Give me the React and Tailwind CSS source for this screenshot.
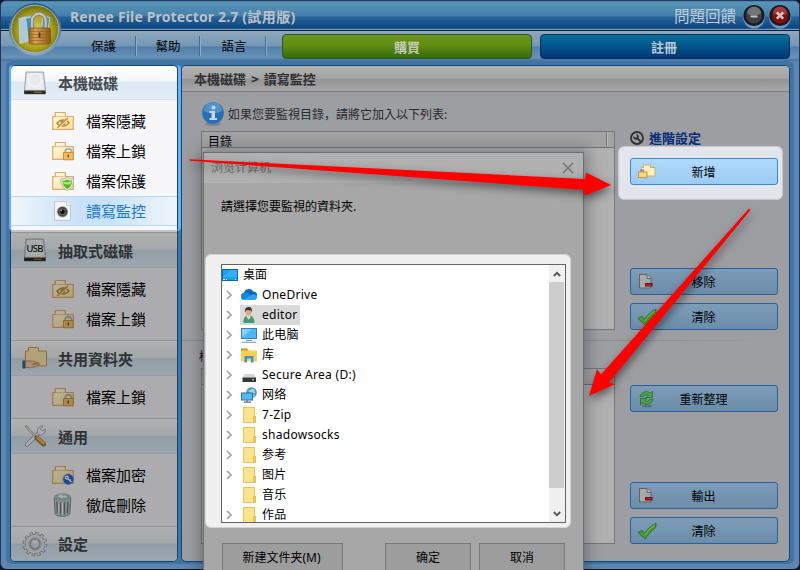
import React from "react";

const FOLDER_PATH = "M.7 18.300V5.500h2.600V1.500h10v4h8v12.800z";

function Folder({ mark }) {
  return (
    <svg width="22" height="20" viewBox="0 0 22 20" className="shrink-0">
      <defs>
        <linearGradient id="fold" x1="0" y1="0" x2="1" y2="1">
          <stop offset="0" stopColor="#fffbe4" />
          <stop offset="1" stopColor="#fbdf98" />
        </linearGradient>
      </defs>
      <path d={FOLDER_PATH} fill="url(#fold)" stroke="#dda970" strokeWidth="1.2" />
      <path d="M3.500 5.600h9.600" stroke="#eac58d" />
      {mark === "hide" && (
        <g fill="none" stroke="#b98a3d" strokeWidth="1.500">
          <path d="M5 12.500c3-4.300 9-4.600 12-.6-3 4-9 4.300-12 .6z" />
          <circle cx="11" cy="12" r="1.800" fill="#b98a3d" />
          <path d="M17 6.500L6 17" stroke="#fbe8b4" strokeWidth="2.400" />
          <path d="M15.800 7L5.500 16.700" strokeWidth="1.200" />
        </g>
      )}
      {mark === "lock" && (
        <g>
          <path d="M13.300 12.500V10.800a3 3 0 016.200 0v1.700" fill="none" stroke="#b0b0b0" strokeWidth="1.900" />
          <path d="M11.500 11.500h9.800v7.300h-9.800z" fill="#efbf62" stroke="#c9913d" />
          <path d="M16.300 13.500v3" stroke="#7b5622" strokeWidth="1.600" />
        </g>
      )}
      {mark === "shield" && (
        <g>
          <path d="M15.300 6c2 1.600 4.200 2 6.400 2 0 5-1.700 9.300-6.400 11.700C10.600 17.300 8.700 13 8.700 8c2.300 0 4.600-.4 6.600-2z" fill="#e5ece4" stroke="#9aa39a" strokeWidth=".7" />
          <path d="M15.300 8.500c1.600.900 3.200 1.300 4.900 1.300-.3 3.600-1.700 6.600-4.900 8.400-3.100-1.800-4.700-4.800-5-8.400 1.800 0 3.400-.4 5-1.300z" fill="#58ba1c" />
          <path d="M11 10.500c3 1 6 .5 8.500-.4l-.8 2.800c-2.200.8-4.600.8-6.900.2z" fill="#a8e672" />
        </g>
      )}
      {mark === "key" && (
        <g>
          <circle cx="16.300" cy="14.200" r="5.400" fill="#2f62c8" stroke="#8aaef0" strokeWidth=".8" />
          <circle cx="14.800" cy="12.600" r="1.500" fill="none" stroke="#fff" strokeWidth="1.300" />
          <path d="M16 13.800l3.300 3.200m-1.500-1.400l1-1" stroke="#fff" strokeWidth="1.300" />
        </g>
      )}
    </svg>
  );
}

function Camera() {
  return (
    <svg width="22" height="20" viewBox="0 0 22 20" className="shrink-0">
      <path d="M2.500 .6h12l4 4v14.800h-16z" fill="#f5f5f5" stroke="#c3c6cb" />
      <path d="M14.500 .6v4h4" fill="#fff" stroke="#c3c6cb" />
      <circle cx="10.500" cy="10.800" r="5.600" fill="#8d8d8d" />
      <circle cx="10.500" cy="10.800" r="4.700" fill="#444" />
      <circle cx="10.500" cy="10.800" r="3.200" fill="#666" />
      <circle cx="10.500" cy="10.800" r="2.300" fill="#0c0c0c" />
      <circle cx="9.200" cy="9.500" r=".8" fill="#aaa" />
    </svg>
  );
}

function Trash() {
  return (
    <svg width="22" height="24" viewBox="0 0 22 24" className="shrink-0">
      <path d="M2.200 4.500l1 16.500c2 3 12.500 3 14.600 0l1-16.500c-3 3.300-13.600 3.300-16.600 0z" fill="#bfcacc" stroke="#79868a" />
      <path d="M5 8.500l.5 12M8.500 9v12.500M12.500 9v12.500M16 8.500l-.5 12" stroke="#6d787b" strokeWidth="1.500" />
      <path d="M6.700 9v12M10.500 9v12.500" stroke="#f6fbfb" />
      <ellipse cx="10.500" cy="4" rx="8" ry="3.300" fill="#8bc1a0" stroke="#b3bdc0" />
      <path d="M5 3.500l4-2.500 4 2.500-3 2zM12 2l4 2-4 1z" fill="#e3f1ff" />
    </svg>
  );
}

function Drive({ usb }) {
  return (
    <svg width="24" height="24" viewBox="0 0 24 24" className="shrink-0">
      <path d="M3 1h17.500l2 18.500v3.500H1.500v-3.500z" fill="#d9dcdf" stroke="#8f9396" strokeWidth=".8" />
      <path d="M1.200 19.500h21.300v3.500H1.200z" fill="#262b28" />
      <path d="M11 20.500h8v1.500h-8z" fill="#7c6420" />
      <path d="M4.200 2h15.200l1.700 16.300H2.600z" fill="#e9ebed" />
      <circle cx="12" cy="9" r="6.500" fill="#e6eaec" stroke="#f8f9fa" />
      {usb && (
        <text x="12" y="14" textAnchor="middle" fontFamily="'Noto Sans', sans-serif" fontWeight="500" fontSize="9.500" fill="#0c0c0c" textLength="17">
          USB
        </text>
      )}
    </svg>
  );
}

function SharedFolder() {
  return (
    <svg width="26" height="24" viewBox="0 0 26 24" className="shrink-0">
      <path d="M3.500 20V5h3V1.500h10V5h8v15z" fill="#f7dfa8" stroke="#c79455" />
      <path d="M1 15.500l3-.5 5 0c2-.5 4 1 5.500 1 2 .2 2 1.600 0 1.900l-4 .3 6-.8c1.800-.2 1.800 1 .3 1.600l-6 2.500c-3 .8-6-.5-9.800-.3z" fill="#efc4a0" stroke="#b37c53" strokeWidth=".8" />
      <path d="M.5 14.500h3v8h-3z" fill="#2f6378" />
    </svg>
  );
}

function Tools() {
  return (
    <svg width="24" height="24" viewBox="0 0 24 24" className="shrink-0">
      <path d="M4 20.500L16.500 8.500" stroke="#8b9299" strokeWidth="4.200" strokeLinecap="round" />
      <path d="M4 20.500L16.500 8.500" stroke="#edf1f4" strokeWidth="2.800" strokeLinecap="round" />
      <path d="M15 9.500c-1.500-4 1-7.500 5-7.500l-2.500 3 2 2.200 3-2.200c.3 4-3 6.500-6 6z" fill="#edf1f4" stroke="#8b9299" strokeWidth=".8" />
      <path d="M2 2.500l2-1 2 3 7 7.500-1.200 1.200L5 6z" fill="#e8ecef" stroke="#8b9299" strokeWidth=".8" />
      <path d="M14 14l6.500 6" stroke="#a4752f" strokeWidth="5" strokeLinecap="round" />
      <path d="M14.500 13.800l6 5.400" stroke="#deb064" strokeWidth="2.800" strokeLinecap="round" />
    </svg>
  );
}

function Gear() {
  return (
    <svg width="26" height="26" viewBox="0 0 26 26" className="shrink-0">
      <circle cx="13" cy="13" r="10.800" fill="none" stroke="#858a8f" strokeWidth="3" strokeDasharray="3 2.650" />
      <circle cx="13" cy="13" r="7.300" fill="none" stroke="#858a8f" strokeWidth="5.800" />
      <circle cx="13" cy="13" r="10.500" fill="none" stroke="#dfe3e6" strokeWidth="2.200" strokeDasharray="2 3.500" strokeDashoffset="-.5" />
      <circle cx="13" cy="13" r="7.400" fill="none" stroke="#dde1e4" strokeWidth="4.400" />
      <circle cx="13" cy="13" r="6" fill="none" stroke="#a4a9ae" />
    </svg>
  );
}

function Logo() {
  return (
    <svg width="56" height="56" viewBox="0 0 56 56">
      <defs>
        <radialGradient id="lg" cx=".5" cy=".55" r=".55">
          <stop offset="0" stopColor="#d9cf62" />
          <stop offset=".65" stopColor="#aaa11e" />
          <stop offset="1" stopColor="#6d6b0c" />
        </radialGradient>
        <linearGradient id="ring" x1="0" y1="0" x2="0" y2="1">
          <stop offset="0" stopColor="#1d568b" />
          <stop offset="1" stopColor="#86aac6" />
        </linearGradient>
        <linearGradient id="gold" x1="0" y1="0" x2="1" y2="0">
          <stop offset="0" stopColor="#9b641c" />
          <stop offset=".3" stopColor="#d8a352" />
          <stop offset="1" stopColor="#8e5716" />
        </linearGradient>
      </defs>
      <circle cx="28" cy="28.500" r="26.300" fill="url(#ring)" />
      <circle cx="28" cy="28" r="23.800" fill="url(#lg)" stroke="#b1b4a6" strokeWidth="1" />
      <path d="M16 16l11-2v24l-10 3z" fill="#b9c6cb" stroke="#8a989e" strokeWidth=".7" />
      <path d="M18 18l8-1.500v20L19 39z" fill="#3e93bb" />
      <path d="M12 17.500l6.500-1.500 3 24-8.500 2.500z" fill="#a9c9d6" stroke="#c9d0d0" strokeWidth=".9" />
      <path d="M36 15l7 1.500-3 18.500h-6z" fill="#489cc0" stroke="#bcc7ca" />
      <path d="M25 28v-8.500a6.800 6.800 0 0113.600 0V28" fill="none" stroke="#7f7d74" strokeWidth="3.800" />
      <path d="M25 28v-8.500a6.800 6.800 0 0113.600 0V28" fill="none" stroke="#c2c2be" strokeWidth="2.200" />
      <rect x="22" y="27" width="21.500" height="16" rx="2" fill="url(#gold)" stroke="#7b4a12" strokeWidth=".7" />
      <path d="M22.500 30.500h20.500M22.500 33.500h20.500M22.500 36.500h20.500M22.500 39.500h20.500" stroke="#8d5a1d" strokeWidth=".7" opacity=".8" />
      <path d="M32.500 31.500v5" stroke="#583208" strokeWidth="1.800" />
    </svg>
  );
}

const SECTIONS = [
  {
    title: "本機磁碟", icon: <Drive />, lit: true, head: "h-[34px]", body: "h-[132px] pt-[6px]",
    items: [["檔案隱藏", <Folder mark="hide" />], ["檔案上鎖", <Folder mark="lock" />], ["檔案保護", <Folder mark="shield" />], ["讀寫監控", <Camera />, true]],
  },
  {
    title: "抽取式磁碟", icon: <Drive usb />, head: "h-[36px]", body: "h-[72px] pt-[6px]",
    items: [["檔案隱藏", <Folder mark="hide" />], ["檔案上鎖", <Folder mark="lock" />]],
  },
  {
    title: "共用資料夾", icon: <SharedFolder />, head: "h-[36px]", body: "h-[42px] pt-[6px]",
    items: [["檔案上鎖", <Folder mark="lock" />]],
  },
  {
    title: "通用", icon: <Tools />, head: "h-[36px]", body: "h-[72px] pt-[6px]",
    items: [["檔案加密", <Folder mark="key" />], ["徹底刪除", <Trash />]],
  },
  { title: "設定", icon: <Gear />, head: "h-[35px]", items: [] },
];

function Sidebar() {
  return (
    <aside className="flex w-[168px] shrink-0 flex-col overflow-hidden rounded-[5px] border border-[#12477c] bg-[#acacaf]">
      {SECTIONS.map((s) => (
        <section key={s.title}>
          <div
            className={
              s.head + " flex items-center border-b text-[15px] font-bold leading-none " +
              (s.lit
                ? "border-[#dcdfe3] bg-[linear-gradient(#ffffff_0%,#f3f7fb_45%,#dbe8f4_50%,#e4eef7_100%)] text-[#44484c]"
                : "border-t border-t-[#949494] border-b-[#9c9c9c] bg-[linear-gradient(#b0b0b0_0%,#a4a7a9_48%,#929da7_52%,#9da6ad_100%)] text-[#303235]")
            }
          >
            <div className={"ml-[10px] flex w-[28px] justify-center " + (s.lit ? "" : "brightness-[0.72]")}>{s.icon}</div>
            <span className="ml-[9px]">{s.title}</span>
          </div>
          {s.items.length > 0 && (
            <div className={s.body + " " + (s.lit ? "border-b-2 border-[#c4c4c6] bg-[#f7f7fa]" : "")}>
              {s.items.map(([label, icon, active]) => (
                <div
                  key={label}
                  className={
                    "flex h-[30px] items-center pl-[41px] text-[15px] leading-none " +
                    (active
                      ? "border-y border-[#b9d8f2] bg-[linear-gradient(90deg,#f1f6fb_0%,#c9e2f9_40%,#c9e2f9_60%,#eff5fb_100%)] text-[#1e78c8]"
                      : "text-black")
                  }
                >
                  <div className={"w-[22px] " + (s.lit ? "" : "brightness-[0.72]")}>{icon}</div>
                  <span className="mb-[2px] ml-[12px]">{label}</span>
                </div>
              ))}
            </div>
          )}
        </section>
      ))}
    </aside>
  );
}

function PageMinus() {
  return (
    <svg width="20" height="20" viewBox="0 0 20 20">
      <path d="M2.500 2.500h7.500l4 4v9.500H2.500z" fill="#a9a9a9" stroke="#626262" />
      <path d="M10 2.500v4h4" fill="#bbb" stroke="#626262" />
      <rect x="8.500" y="11.500" width="6.500" height="2.500" fill="#a92e2e" stroke="#6d0c0c" />
    </svg>
  );
}

function Check() {
  return (
    <svg width="20" height="20" viewBox="0 0 20 20">
      <path d="M1 11.500l3.800-2.200 3 3C10.500 8 14 4.500 19 2.200l-.2 4.300C14.500 9.500 11 13.500 8.200 18z" fill="#4c9a32" stroke="#276b1b" strokeWidth=".8" />
      <path d="M8 14c2.500-4 5.500-7.500 10-10" stroke="#78bc59" fill="none" />
    </svg>
  );
}

function Refresh() {
  return (
    <svg width="20" height="20" viewBox="0 0 20 20">
      <ellipse cx="10" cy="17" rx="5" ry="1.300" fill="#3b5b70" opacity=".6" />
      <g fill="#54a044" stroke="#246d26" strokeWidth=".8">
        <path d="M3 7.500C4.500 2.500 10 1.300 13.500 4.200l2-2.200v6.500H9l2.200-2.200c-2-1.400-4.200-.8-5 1.200z" />
        <path d="M16 10.500C14.500 15.500 9 16.700 5.500 13.800l-2 2.200V9.500H10l-2.200 2.200c2 1.400 4.200.8 5-1.200z" />
      </g>
    </svg>
  );
}

function AddFolder() {
  return (
    <svg width="20" height="20" viewBox="0 0 20 20">
      <path d="M4.500 14V5.500h2V3h7v2.500h4.500V14z" fill="#fff1bd" stroke="#d8aa65" />
      <path d="M4 10V8.200h2.500V10" fill="none" stroke="#888d93" strokeWidth="1.400" />
      <rect x="1.500" y="10" width="8.500" height="5.500" fill="#fbd785" stroke="#c99340" />
    </svg>
  );
}

function ActionButton({ label, icon, lit }) {
  return (
    <button
      className={
        "relative flex h-[27px] w-[148px] shrink-0 items-center justify-center rounded-[3px] border text-[12px] leading-none text-black " +
        (lit ? "border-[#3b88d4] bg-[linear-gradient(#b1dafe,#9ccaf2)]" : "border-[#28609f] bg-[linear-gradient(#7c9cb8,#6c8da9)]")
      }
    >
      <span className="absolute left-[6px] top-[3px]">{icon}</span>
      <span className="pr-px">{label}</span>
    </button>
  );
}

function EmptyTable({ label, className }) {
  return (
    <div className={"flex w-[414px] flex-col border border-[#77777a] bg-[#b0b0b0] " + className}>
      <div className="flex h-[16px] shrink-0 border-b border-[#727274] bg-[#a3a3a3]">
        <div className="flex w-[405px] items-center border-r border-[#727274] pl-[6px] pt-[2px] text-[12px] leading-none text-black">{label}</div>
        <div className="flex-1 border-l border-[#bbb]" />
      </div>
    </div>
  );
}

function Content() {
  return (
    <main className="flex w-[609px] shrink-0 flex-col overflow-hidden rounded-[5px] border border-[#12477c] bg-[#9d9ea2]">
      <div className="flex h-[26px] shrink-0 items-center border-b border-[#7b7b7d] bg-[linear-gradient(#b1b1b1_0%,#a5a5a5_48%,#959595_55%,#a6a6a6_100%)] pl-[12px] text-[13px] font-bold leading-none text-[#303032]">
        本機磁碟<span className="mx-[5px]">&gt;</span>讀寫監控
      </div>
      <div className="flex flex-1">
        <div className="w-[436px] shrink-0 pt-[9px]">
          <div className="flex h-[26px] items-center pl-[19px] text-[12px] leading-none text-[#29292b]">
            <svg width="24" height="26" viewBox="0 0 24 26">
              <ellipse cx="12" cy="23" rx="8" ry="2" fill="#6f7277" opacity=".6" />
              <circle cx="12" cy="12" r="10.800" fill="#2370b5" />
              <path d="M3 10a9 9 0 0118 0c-5 3-13 3-18 0z" fill="#5093c7" />
              <circle cx="12.500" cy="6.500" r="2" fill="#d0d5d9" />
              <path d="M8.500 10H14v7h2v2H8.500v-2h2v-5h-2z" fill="#d0d5d9" />
            </svg>
            <span className="ml-[3px]">如果您要監視目錄<span lang="zh-CN" className="font-['Noto_Sans_CJK_SC',sans-serif]">，</span>請將它加入以下列表:</span>
          </div>
          <EmptyTable label="目錄" className="ml-[19px] mt-[4px] h-[199px]" />
          <div className="mt-[10px] h-px w-[590px] bg-[linear-gradient(90deg,#88888b_0%,#88888b_75%,#9d9ea2_100%)]" />
          <div className="mt-[9px] h-[12px] pl-[17px] text-[12px] leading-none text-black">檔</div>
          <EmptyTable label="" className="ml-[19px] mt-[6px] h-[176px]" />
        </div>
        <div className="flex w-[166px] shrink-0 flex-col pt-[36px]">
          <div className="flex h-[18px] items-center pl-[12px] pt-px">
            <svg width="14" height="14" viewBox="0 0 14 14">
              <circle cx="7" cy="7" r="6" fill="none" stroke="#303236" strokeWidth="1.800" />
              <path d="M3.200 5.200C3 8 5 9.200 7 8.500l3 2.700 1.300-1.300-2.600-3c.7-2-.5-4-3-3.700l1.600 1.700-1.200 1.800z" fill="#303236" />
            </svg>
            <span className="ml-[5px] text-[13px] font-bold leading-none text-[#062c78]">進階設定</span>
          </div>
          <div className="h-[54px] w-[165px] rounded-[6px] border border-[#c5c8ce] bg-[#e2e6ec] pl-[11px] pt-[11px]">
            <ActionButton lit label="新增" icon={<AddFolder />} />
          </div>
          <div className="flex flex-col pl-[12px] pt-[68px]">
            <ActionButton label="移除" icon={<PageMinus />} />
            <div className="h-[8px]" />
            <ActionButton label="清除" icon={<Check />} />
            <div className="h-[55px]" />
            <ActionButton label="重新整理" icon={<Refresh />} />
            <div className="h-[70px]" />
            <ActionButton label="輸出" icon={<PageMinus />} />
            <div className="h-[8px]" />
            <ActionButton label="清除" icon={<Check />} />
          </div>
        </div>
      </div>
    </main>
  );
}

const YellowFolder = () => (
  <svg width="16" height="16" viewBox="0 0 16 16">
    <path d="M2.500.5h11v8.500h1v6.500h-12z" fill="#fce48f" stroke="#e9c253" />
    <path d="M12.500 15V9.500h1.500V15z" fill="#f9db78" stroke="#e3b844" strokeWidth=".8" />
  </svg>
);
const DesktopIcon = () => (
  <svg width="16" height="12" viewBox="0 0 16 12">
    <rect x=".5" y=".5" width="15" height="11" fill="#17a0fb" stroke="#0a69b5" />
    <path d="M1 8L9 1h6v7z" fill="#36aefc" />
    <path d="M1 10.500h2m1 0h1m8 0h1" stroke="#e8f6ff" />
  </svg>
);
const CloudIcon = () => (
  <svg width="16" height="16" viewBox="0 0 16 16">
    <path d="M3.500 12.500a3.500 3.500 0 01-.3-6.900 5 5 0 019-1.200 3.500 3.500 0 013.800 4l-3 4.100z" fill="#0d67c0" />
    <path d="M3.500 6a4.300 4.300 0 015 1l5.500 4.500-1 1.500H3.500A3.500 3.500 0 013.500 6z" fill="#1487dd" />
    <path d="M2 12.500l9.500-5c2-.6 4.500.6 4.500 2.800 0 1.500-1 2.700-2.600 2.700H4z" fill="#2ba4ef" />
  </svg>
);
const PersonIcon = () => (
  <svg width="16" height="16" viewBox="0 0 16 16">
    <path d="M2.500 16c-.4-4.500 1-7.500 5-7.500s6 2.500 6 7.500z" fill="#429b78" />
    <path d="M6 8h3l.5 3-2 1.500L5.500 10z" fill="#efd8c1" />
    <ellipse cx="7.500" cy="5" rx="2.900" ry="3.800" fill="#d9ad86" />
    <path d="M4 5.500C3.500 1 6 0 8 0c2.500 0 3.500 2 2.800 5.500L10 3.500 5.500 3z" fill="#3b3532" />
  </svg>
);
const PcIcon = () => (
  <svg width="16" height="16" viewBox="0 0 16 16">
    <rect x=".5" y="1.500" width="15" height="10" fill="#4db7fb" stroke="#3d7ba8" />
    <path d="M1 10L11 2H1z" fill="#85d0fe" />
    <path d="M5 13.500h6M1 15.300h14" stroke="#7893aa" />
  </svg>
);
const LibraryIcon = () => (
  <svg width="16" height="16" viewBox="0 0 16 16">
    <path d="M0 1.500h6l1.500 2H16v11H0z" fill="#ffcf50" />
    <path d="M0 1.500h6l1.500 2H0z" fill="#d9980e" />
    <path d="M3.500 15.500V9h9v6.500H10v-4H6v4z" fill="#3694dc" />
  </svg>
);
const DiskIcon = () => (
  <svg width="16" height="16" viewBox="0 0 16 16">
    <path d="M3.500 7h9.500l2 3.500H1.500z" fill="#d2d4d6" />
    <path d="M1.500 10.500H15V15H1.500z" fill="#333638" />
    <path d="M11 12.700h2" stroke="#46ed48" strokeWidth="1.500" />
  </svg>
);
const NetworkIcon = () => (
  <svg width="16" height="16" viewBox="0 0 16 16">
    <circle cx="10.500" cy="5.500" r="5.300" fill="#4395bb" />
    <path d="M6 3c3 2 4-2 7-1l1.500 4-4 1zM10 7l4 1-2 2z" fill="#a4d4dc" />
    <rect x=".5" y="6" width="11" height="7" fill="#54b9f8" stroke="#316e9c" />
    <path d="M3 15.200h7M6 13v2" stroke="#55748c" strokeWidth="1.200" />
  </svg>
);

const TREE = [
  ["OneDrive", CloudIcon], ["editor", PersonIcon], ["此电脑", PcIcon], ["库", LibraryIcon],
  ["Secure Area (D:)", DiskIcon], ["网络", NetworkIcon], ["7-Zip", YellowFolder], ["shadowsocks", YellowFolder],
  ["参考", YellowFolder], ["图片", YellowFolder], ["音乐", YellowFolder], ["作品", YellowFolder],
];

function BrowseDialog() {
  return (
    <div className="absolute left-[203px] top-[152px] flex h-[430px] w-[381px] flex-col border border-[#6e6e6e] bg-[#a7a7a7] shadow-[0_0_14px_3px_rgba(40,45,55,0.42)] font-['Noto_Sans','Noto_Sans_CJK_SC',sans-serif]">
      <div className="flex h-[30px] shrink-0 items-center justify-between bg-[#b0b0b0] pl-[7px] pr-[9px] text-[12px] leading-none text-[#707070]">
        浏览计算机
        <svg width="12" height="12" viewBox="0 0 12 12"><path d="M1 1l10 10M11 1L1 11" stroke="#696969" strokeWidth="1.100" /></svg>
      </div>
      <div className="h-[71px] shrink-0 pl-[17px] pt-[16px] text-[12px] leading-[14px] text-black font-['Noto_Sans_CJK_TC',sans-serif]">請選擇您要監視的資料夾.</div>
      <div className="ml-[1px] h-[274px] w-[366px] shrink-0 rounded-[6px] border border-[#d3d3d3] bg-[#f0f0f0] pl-[15px] pt-[9px]">
        <div className="flex h-[259px] w-[345px] overflow-hidden border border-[#646464] bg-white">
          <div className="flex-1 text-[12px] leading-none tracking-[0.28px] text-black">
            <div className="flex h-[20px] items-center"><DesktopIcon /><span className="ml-[5px] tracking-normal">桌面</span></div>
            {TREE.map(([label, Icon]) => (
              <div key={label} className="flex h-[20px] items-center">
                <div className="w-[18px] pl-[4px]">
                  {label !== "音乐" && (
                    <svg width="6" height="10" viewBox="0 0 6 10"><path d="M1 1l4 4-4 4" fill="none" stroke="#a3a3a3" strokeWidth="1.700" /></svg>
                  )}
                </div>
                <div className={"flex h-[20px] items-center whitespace-nowrap pl-[1px] pr-[3px] " + (label === "editor" ? "bg-[#d9d9d9]" : "")}>
                  <Icon />
                  <span className="ml-[5px]">{label}</span>
                </div>
              </div>
            ))}
          </div>
          <div className="flex w-[16px] flex-col items-center bg-[#f0f0f0]">
            <div className="flex h-[17px] shrink-0 items-center"><svg width="8" height="6" viewBox="0 0 8 6"><path d="M.8 5L4 1.800 7.200 5" fill="none" stroke="#555" strokeWidth="1.900" /></svg></div>
            <div className="h-[206px] w-[15px] shrink-0 self-start bg-[#cdcdcd]" />
            <div className="flex flex-1 items-end pb-[5px]"><svg width="8" height="6" viewBox="0 0 8 6"><path d="M.8 1L4 4.200 7.200 1" fill="none" stroke="#555" strokeWidth="1.900" /></svg></div>
          </div>
        </div>
      </div>
      <div className="mt-[15px] flex h-[30px] shrink-0 pl-[18px] text-[12px] leading-none text-black">
        <div className="flex w-[121px] items-center justify-center border border-[#787878] bg-[#9d9d9d] pr-[2px]">新建文件夹(M)</div>
        <div className="ml-[42px] flex w-[86px] items-center justify-center border border-[#787878] bg-[#9d9d9d]">确定</div>
        <div className="ml-[8px] flex w-[86px] items-center justify-center border border-[#787878] bg-[#9d9d9d]">取消</div>
      </div>
    </div>
  );
}

function WindowButton({ close }) {
  return (
    <svg width="24" height="26" viewBox="0 0 24 26">
      <ellipse cx="12" cy="14" rx="11" ry="11.500" fill="#6d98ba" />
      <circle cx="12" cy="12.500" r="10.600" fill="#191b20" />
      <circle cx="12" cy="12.500" r="8" fill={close ? "#850d10" : "#3c3e42"} />
      <path d="M5 10.500a7 7 0 0114 0c-4 2.500-10 2.500-14 0z" fill={close ? "#a43a3a" : "#717376"} />
      {close ? (
        <path d="M8.800 9.300l6.400 6.400M15.200 9.300l-6.400 6.400" stroke="#c9c9c9" strokeWidth="2.600" />
      ) : (
        <path d="M8.500 13.500h7" stroke="#c0c0c0" strokeWidth="2.200" />
      )}
    </svg>
  );
}

export default function App() {
  return (
    <div className="relative h-[570px] w-[800px] overflow-hidden bg-[#101426] font-['Noto_Sans_CJK_TC',sans-serif]">
      <div className="flex h-[569px] w-[800px] flex-col overflow-hidden rounded-[6px] border-x border-t border-[#26375c] bg-[#5a86af]">
        <header className="flex h-[30px] shrink-0 items-center border-b border-[#0b2447] bg-[linear-gradient(#467fa5_0%,#5795b7_6%,#457fac_50%,#28639a_56%,#0a457f_94%,#7592af_97%)] pl-[69px] pr-[7px]">
          <h1 className="flex items-center whitespace-pre pt-[2px] text-[14px] font-bold leading-none tracking-[0.15px] text-[#bdc1c5] font-['Noto_Sans','Noto_Sans_CJK_TC',sans-serif]">
            <span>Renee File Protector 2.7 </span>
            <span className="tracking-[0.4px]">(試用版)</span>
          </h1>
          <div className="ml-auto flex items-center gap-[2px]">
            <span className="mr-[4px] text-[15.500px] leading-none text-[#c2ccd5]">問題回饋</span>
            <WindowButton />
            <WindowButton close />
          </div>
        </header>
        <nav className="flex h-[30px] shrink-0 items-center bg-[linear-gradient(#8fa8bc_0%,#7698b5_48%,#527faa_54%,#6893b7_88%,#416f9d_100%)] pl-[70px] text-[12.500px] leading-none text-black">
          <div className="flex h-[20px] w-[65px] items-center justify-center border-r border-[#436f92] pl-px shadow-[1px_0_0_#8baec5]">保護</div>
          <div className="flex h-[20px] w-[64px] items-center justify-center border-r border-[#436f92] pl-px shadow-[1px_0_0_#8baec5]">幫助</div>
          <div className="flex h-[20px] w-[66px] items-center justify-center border-r border-[#436f92] pl-[3px] shadow-[1px_0_0_#8baec5]">語言</div>
          <button className="ml-[16px] h-[25px] w-[250px] shrink-0 rounded-[4px] border border-[#315816] bg-[linear-gradient(#6b961c_0%,#608c14_48%,#336a0c_100%)] pt-px text-[13px] font-bold leading-none text-[#c3cbb8]">購買</button>
          <button className="ml-[8px] h-[25px] w-[250px] shrink-0 rounded-[4px] border border-[#072e5d] bg-[linear-gradient(#04709a_0%,#03538a_50%,#023878_100%)] pr-[2px] pt-px text-[13px] font-bold leading-none text-[#bec8d2]">註冊</button>
        </nav>
        <div className="mx-[5px] flex h-[503px] shrink-0 gap-[3px] rounded-[6px] bg-[#4173a3] px-[4px] pb-[2px] pt-[4px]">
          <Sidebar />
          <Content />
        </div>
      </div>
      <div className="absolute left-[7px] top-[1px]"><Logo /></div>
      <div className="absolute left-[9px] top-[65px] h-[166px] w-[172px] rounded-[4px] border-l-2 border-r-[3px] border-[#65b0f8]" />
      <BrowseDialog />
      <svg className="absolute left-0 top-0 drop-shadow-[1px_4px_4px_rgba(0,0,0,0.5)]" width="800" height="570" viewBox="0 0 800 570">
        <path d="M189 159.300L585 179l1-6.500 25 12.500-27 11 1-6-395-29.300z" fill="#fe0000" />
        <path d="M749 208.500l1.500 1.500L609 382.500l6 1.500-26 12 8-27 4 5.500z" fill="#fe0000" />
      </svg>
    </div>
  );
}
